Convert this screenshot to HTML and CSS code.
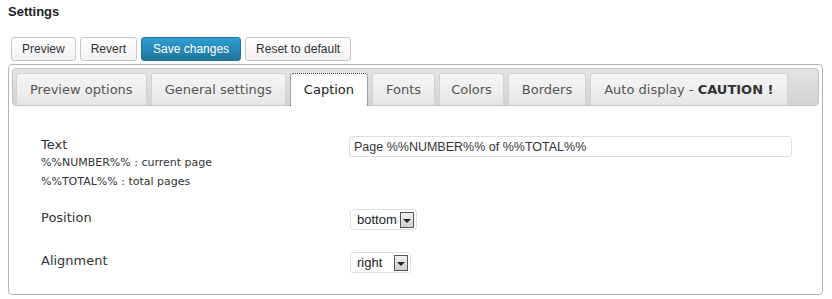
FILE: index.html
```html
<!DOCTYPE html>
<html lang="en">
<head>
<meta charset="UTF-8">
<title>Settings</title>
<link rel="stylesheet" href="styles.css">
</head>
<body>

<h3 class="title">Settings</h3>

<div class="actions">
  <button class="btn">Preview</button>
  <button class="btn">Revert</button>
  <button class="btn btn-primary">Save changes</button>
  <button class="btn">Reset to default</button>
</div>

<div class="panel">
  <ul class="tabs">
    <li class="tab">Preview options</li>
    <li class="tab">General settings</li>
    <li class="tab active">Caption</li>
    <li class="tab">Fonts</li>
    <li class="tab tab-colors">Colors</li>
    <li class="tab tab-borders">Borders</li>
    <li class="tab tab-auto">Auto display - <b>CAUTION !</b></li>
  </ul>

  <div class="tab-body">
    <div class="row">
      <div class="label">
        Text
        <div class="help">%%NUMBER%% : current page</div>
        <div class="help">%%TOTAL%% : total pages</div>
      </div>
      <div class="field"><input class="text-input" type="text" value="Page %%NUMBER%% of %%TOTAL%%"></div>
    </div>
    <div class="row">
      <div class="label">Position</div>
      <div class="field">
        <span class="select">bottom<span class="arrow"></span></span>
      </div>
    </div>
    <div class="row">
      <div class="label">Alignment</div>
      <div class="field">
        <span class="select select-right">right<span class="arrow"></span></span>
      </div>
    </div>
  </div>
</div>

</body>
</html>
```

FILE: styles.css
```css
body {
  margin: 0;
  padding: 0 9px 0 8px;
  background: #fff;
  font-family: "Liberation Sans", Arial, sans-serif;
  color: #333;
}
.title {
  margin: 0;
  padding-top: 4px;
  font-size: 13px;
  font-weight: bold;
  color: #222;
  line-height: 16px;
}
.actions {
  display: flex;
  gap: 4px;
  margin: 17px 0 3px 3px;
}
.btn {
  height: 24px;
  padding: 0 10px;
  border: 1px solid #c8c8c8;
  border-radius: 3px;
  background: linear-gradient(#fefefe, #f3f3f3);
  font-family: "Liberation Sans", Arial, sans-serif;
  font-size: 12px;
  color: #333;
}
.btn-primary {
  padding: 0 11px;
  background: linear-gradient(#2e9fd2, #21759b);
  border-color: #21759b;
  color: #fff;
}
.panel {
  border: 1px solid #b4b4b4;
  border-radius: 4px;
  padding: 3px 3px 0 3px;
  height: 226px;
}
.tabs {
  display: flex;
  gap: 4px;
  margin: 0;
  padding: 4px 0 0 3px;
  list-style: none;
  height: 32px;
  border: 1px solid #c4c4c4;
  border-radius: 4px;
  background: linear-gradient(#e4e4e4, #d2d2d2);
  font-family: "DejaVu Sans", Verdana, sans-serif;
  font-size: 13px;
}
.tab {
  padding: 0 13px;
  line-height: 31px;
  border: 1px solid #d4d4d4;
  border-bottom: none;
  border-radius: 3px 3px 0 0;
  background: linear-gradient(#f6f6f6, #e6e6e6);
  color: #555;
}
.tab-colors {
  padding: 0 11px;
}
.tab-borders {
  padding: 0 13px;
}
.tab-auto {
  padding: 0 13px;
}
.tab b {
  color: #333;
}
.tab.active {
  background: #fff;
  color: #222;
  border: 1px dotted #444;
  border-bottom: none;
  margin-bottom: -1px;
}
.tab-body {
  padding: 31px 27px 0 29px;
  font-family: "DejaVu Sans", Verdana, sans-serif;
  color: #333;
}
.row {
  display: flex;
  align-items: flex-start;
}
.label {
  width: 309px;
  font-size: 13px;
  line-height: 16px;
}
.help {
  font-size: 11px;
  line-height: 19px;
}
.row:nth-child(2) {
  margin-top: 18px;
}
.row:nth-child(3) {
  margin-top: 22px;
}
.row:nth-child(2) .label,
.row:nth-child(3) .label {
  padding-top: 1px;
}
.field {
  flex: 1;
}
.text-input {
  display: block;
  box-sizing: border-box;
  width: 443px;
  height: 21px;
  margin: -1px 0 0;
  padding: 0 4px;
  border: 1px solid #dfdfdf;
  border-radius: 3px;
  font-family: "Liberation Sans", Arial, sans-serif;
  font-size: 12.5px;
  color: #333;
}
.select {
  display: flex;
  width: max-content;
  align-items: center;
  gap: 3px;
  height: 21px;
  padding: 0 2px 0 6px;
  border: 1px solid #dfdfdf;
  border-radius: 3px;
  font-family: "Liberation Sans", Arial, sans-serif;
  font-size: 13px;
  color: #222;
  box-sizing: border-box;
}
.select-right {
  gap: 12px;
}
.arrow {
  position: relative;
  width: 12px;
  height: 14px;
  border: 1px solid #555;
  background: linear-gradient(#f2f2f2, #cfcfcf);
}
.arrow::after {
  content: "";
  position: absolute;
  left: 2px;
  top: 6px;
  border-left: 4px solid transparent;
  border-right: 4px solid transparent;
  border-top: 4px solid #222;
}
```
